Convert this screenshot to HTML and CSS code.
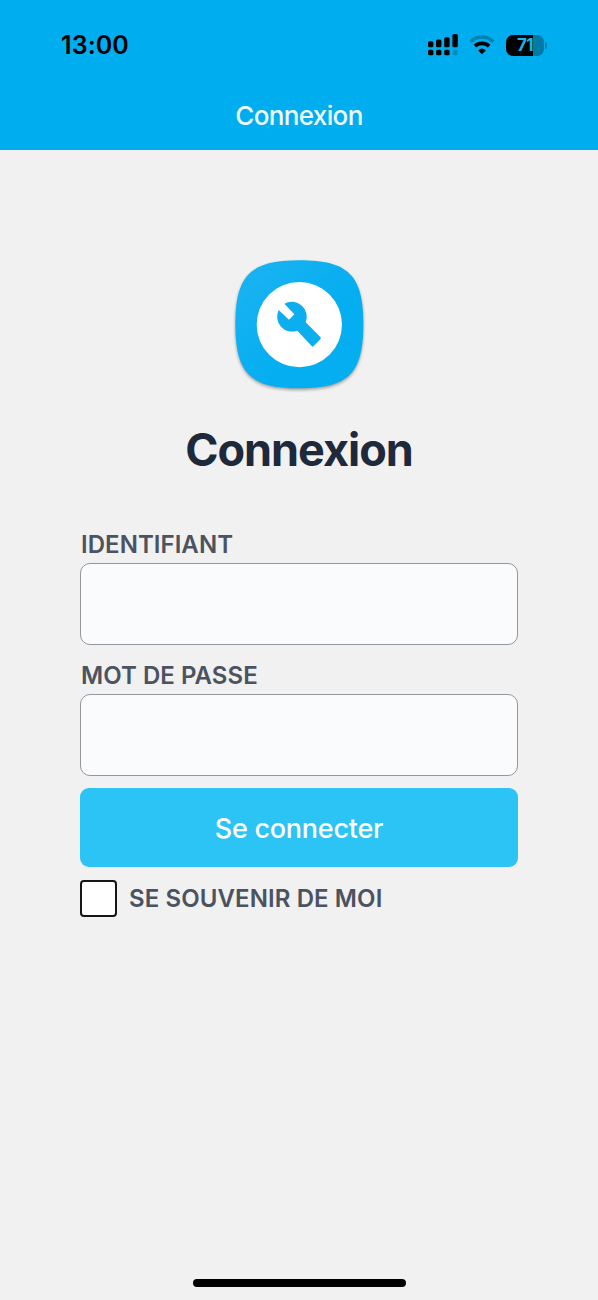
FILE: index.html
```html
<!DOCTYPE html>
<html lang="fr">
<head>
<meta charset="utf-8">
<title>Connexion</title>
<link rel="stylesheet" href="styles.css">
</head>
<body>
<header class="topbar">
  <div class="status">
    <span class="time">13:00</span>
    <div class="indicators">
      <svg class="signal" width="30" height="22" viewBox="0 0 30 22">
        <rect x="0" y="7.2" width="5.4" height="6" rx="1.5"/>
        <rect x="8" y="5.4" width="5.400" height="7.8" rx="1.5"/>
        <rect x="16.2" y="3.2" width="5.400" height="10" rx="1.5"/>
        <rect x="24.4" y="0" width="5.400" height="13.2" rx="1.5"/>
        <rect x="0" y="15.800" width="5.400" height="5.400" rx="1.5"/>
        <rect x="8" y="15.800" width="5.400" height="5.400" rx="1.5"/>
        <rect x="16.2" y="15.800" width="5.400" height="5.400" rx="1.5"/>
        <rect class="dim" x="24.4" y="15.800" width="5.400" height="5.400" rx="1.5"/>
      </svg>
      <svg class="wifi" width="26" height="20" viewBox="0 0 26 20">
        <path class="arc dim-arc" d="M1.6 6.7Q6.6 2 13 2Q19.400 2 24.400 6.700"/>
        <path class="arc" d="M5.900 11.100Q8.800 8.400 13 8.400Q17.200 8.400 20.100 11.100"/>
        <path d="M13 19.200L9.200 15.500Q13 11.700 16.800 15.500Z"/>
      </svg>
      <div class="battery"><span class="cell">71</span><span class="tip"></span></div>
    </div>
  </div>
  <div class="nav-title">Connexion</div>
</header>
<main class="login">
  <svg class="logo" width="160" height="150" viewBox="0 0 480 450" aria-hidden="true">
    <defs>
      <linearGradient id="tile" x1="0" y1="0" x2="1" y2="1">
        <stop offset="0" stop-color="#1db3f2"/>
        <stop offset=".6" stop-color="#04aef0"/>
      </linearGradient>
    </defs>
    <path class="tile" fill="url(#tile)" d="M238 31C385 31 430 76 430 223C430 370 385 415 238 415C91 415 46 370 46 223C46 76 91 31 238 31Z"/>
    <circle cx="238" cy="224" r="128" fill="#fff"/>
    <path fill="#0caeef" d="M193 161A45 45 0 0 1 257 217L301 261Q304 265 301 268L281 288Q278 291 275 288L232 242A45 45 0 0 1 176 180L207 209L223 193Z"/>
  </svg>
  <h1 class="title">Connexion</h1>
  <form class="form">
    <label class="label" for="user">IDENTIFIANT</label>
    <input class="field" id="user" type="text">
    <label class="label label-pass" for="pass">MOT DE PASSE</label>
    <input class="field" id="pass" type="password">
    <button class="submit" type="button">Se connecter</button>
    <div class="remember">
      <input class="check" id="remember" type="checkbox">
      <label class="label label-remember" for="remember">SE SOUVENIR DE MOI</label>
    </div>
  </form>
</main>
<footer class="footer"><div class="home-bar"></div></footer>
</body>
</html>
```
FILE: styles.css
```css
* { box-sizing: border-box; }
body {
  margin: 0;
  height: 1300px;
  display: flex;
  flex-direction: column;
  background: #f1f1f1;
  font-family: Inter, "Liberation Sans", sans-serif;
  overflow: hidden;
}
.topbar { height: 149.500px; flex: none; background: #00aeef; }
.status {
  height: 90px;
  padding: 0 51px 0 61px;
  display: flex;
  justify-content: space-between;
  align-items: center;
}
.time { font-size: 25px; font-weight: 600; line-height: 30px; letter-spacing: .1px; }
.indicators { display: flex; align-items: center; }
.signal { margin-right: 11px; }
.wifi { margin-right: 11px; }
.dim { opacity: .2; }
.arc { fill: none; stroke: #000; stroke-width: 3.6; }
.dim-arc { opacity: .25; }
.battery { display: flex; align-items: center; gap: 1px; }
.cell {
  width: 38px;
  height: 21px;
  border-radius: 7px;
  background: linear-gradient(90deg, #000 71%, #007aa8 71%);
  color: #19b5f0;
  font-size: 17px;
  font-weight: 700;
  line-height: 21px;
  text-align: center;
  letter-spacing: -.5px;
}
.tip { width: 2px; height: 7px; border-radius: 0 2px 2px 0; background: #007aa8; }
.nav-title {
  color: #effbff;
  font-size: 26px;
  font-weight: 500;
  line-height: 32px;
  padding-top: 10px;
  text-align: center;
  letter-spacing: -.65px;
}
.login { flex: 1; display: flex; flex-direction: column; align-items: center; }
.logo { flex: none; margin-top: 100.500px; margin-left: 2px; overflow: visible; }
.tile { filter: drop-shadow(0 5px 4px rgba(0, 0, 0, .35)); }
.title {
  margin: 22px 0 0;
  color: #1e293b;
  font-size: 45px;
  font-weight: 700;
  line-height: 56px;
  letter-spacing: -1px;
}
.form { width: 438px; margin-top: 52px; display: flex; flex-direction: column; }
.label { color: #4b5360; font-size: 24px; font-weight: 600; line-height: 30px; padding-left: 1px; letter-spacing: .05px; }
.label-pass { margin-top: 16px; }
.label-remember { padding: 2px 0 0; letter-spacing: .1px; }
.field {
  height: 82px;
  margin: 3px 0 0;
  padding: 0 20px;
  border: 1px solid #94979b;
  border-radius: 10px;
  background: #f9fbfd;
  font: 26px Inter, sans-serif;
}
.submit {
  height: 79px;
  margin-top: 12px;
  padding: 2px 0 0;
  border: 0;
  border-radius: 9px;
  background: #2cc3f5;
  color: #fff;
  font: 500 27px/33px Inter, sans-serif;
  letter-spacing: -.25px;
}
.remember { display: flex; align-items: center; gap: 12px; margin-top: 12.500px; }
.check {
  appearance: none;
  width: 37px;
  height: 37px;
  margin: 0;
  border: 2px solid #161616;
  border-radius: 4px;
  background: #fff;
}
.footer { flex: none; height: 21px; display: flex; justify-content: center; }
.home-bar { width: 213px; height: 8px; border-radius: 4px; background: #000; }
```
